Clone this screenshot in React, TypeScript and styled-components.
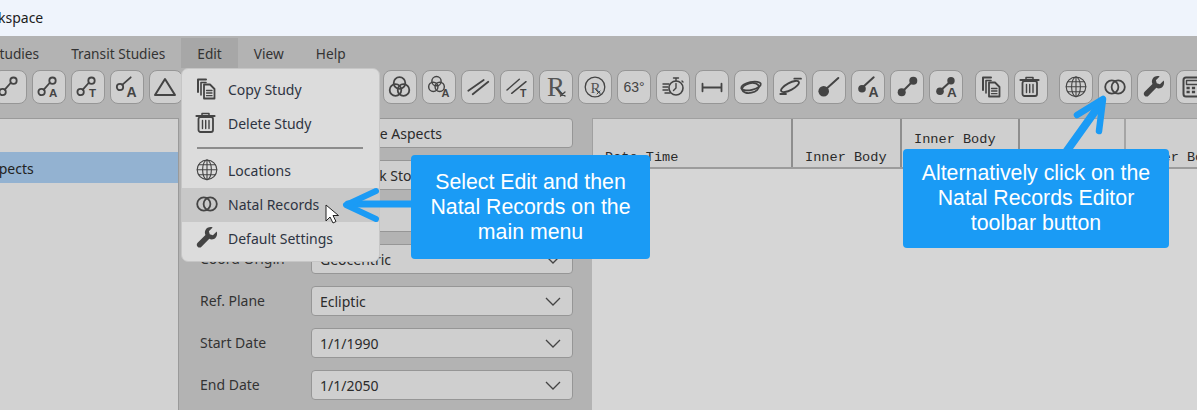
import React from "react";
import styled, { createGlobalStyle } from "styled-components";

const Global = createGlobalStyle`
  html, body { margin: 0; padding: 0; background: #b3b3b3; overflow: hidden; }
  body { font-family: "Noto Sans", "Open Sans", sans-serif; font-size: 14px; color: #2b2b2b; }
  * { box-sizing: border-box; }
`;

const Page = styled.div`
  position: relative; width: 1197px; height: 410px; overflow: hidden;
  display: flex; flex-direction: column; background: #b3b3b3;
`;
const TitleBar = styled.div`
  height: 36px; flex: none; background: #eff4fc; display: flex; align-items: center;
  font-size: 14px; color: #1c1c1c; padding-bottom: 1px;
`;
const TitleText = styled.span` margin-left: -29px; `;
const MenuBar = styled.div`
  height: 32px; flex: none; display: flex; margin-left: -24px; padding-top: 2px; font-size: 13.7px;
`;
const MenuTab = styled.div<{ $active?: boolean }>`
  padding: 0 16px; display: flex; align-items: center; height: 30px; color: #333;
  background: ${p => (p.$active ? "#a7a7a7" : "transparent")};
`;
const Toolbar = styled.div` height: 50px; flex: none; display: flex; margin-left: -7px; padding-top: 2px; `;
const ToolGroup = styled.div<{ $gap?: number }>` display: flex; gap: 5px; margin-right: ${p => p.$gap ?? 0}px; `;
const ToolButton = styled.div`
  width: 34px; height: 34px; flex: none; border: 1.5px solid #969696; border-radius: 8px; background: #cfcfcf;
  display: flex; align-items: center; justify-content: center; color: #444;
`;
const ToolLabel = styled.span` font-size: 14px; font-weight: 500; color: #444; font-family: "Liberation Sans", sans-serif; `;
const Glyph = styled.svg.attrs({ viewBox: "0 0 26 26", width: 26, height: 26 })`
  flex: none; fill: none; stroke: #444; stroke-width: 1.8; stroke-linecap: round; stroke-linejoin: round;
  text { stroke: none; fill: #444; font-family: "Liberation Sans", sans-serif; font-weight: 700; font-size: 13px; }
  .rx { font-family: "Liberation Serif", serif; font-weight: 400; fill: #555; }
  .solid { fill: #444; stroke: none; }
`;

const Content = styled.div` flex: 1; display: flex; min-height: 0; `;
const LeftPanel = styled.div`
  width: 179px; flex: none; background: #d2d2d2; border-top: 1.5px solid #9a9a9a; border-right: 1.5px solid #9a9a9a;
  padding-top: 33px;
`;
const Selected = styled.div`
  height: 31px; background: #93b2d1; display: flex; align-items: center; color: #222; padding-top: 2px;
`;
const SelectedText = styled.span` margin-left: -17px; `;
const Middle = styled.div`
  width: 413px; flex: none; padding: 0 19px 0 21px; display: flex; flex-direction: column; gap: 12px;
`;
const WideButton = styled.div`
  height: 30px; border: 1.5px solid #969696; border-radius: 4px; background: #cfcfcf;
  display: flex; align-items: center; justify-content: center; color: #2b2b2b; flex: none; padding-right: 4px;
`;
const FieldRow = styled.div` display: grid; grid-template-columns: 111px 1fr; align-items: center; height: 30px; flex: none; `;
const FieldLabel = styled.div` color: #333; padding-bottom: 2px; `;
const Select = styled.div`
  height: 30px; border: 1.5px solid #969696; border-radius: 4px; background: #cfcfcf; padding: 0 11px 0 8px;
  display: flex; align-items: center; justify-content: space-between; color: #2b2b2b;
`;
const Chevron = styled.svg.attrs({ viewBox: "0 0 16 9", width: 16, height: 9 })`
  fill: none; stroke: #444; stroke-width: 1.3;
`;
const TablePanel = styled.div` flex: 1; background: #d6d6d6; display: flex; flex-direction: column; min-width: 0; `;
const HeaderRow = styled.div`
  height: 51px; background: #cfcfcf; display: flex; border-top: 1.5px solid #a0a0a0; border-left: 1.5px solid #a0a0a0;
  border-bottom: 2px solid #9c9c9c; font-family: "Liberation Mono", monospace; font-size: 13.6px; color: #2a2a2a;
`;
const HeaderCell = styled.div<{ $w: number; $edge?: string }>`
  width: ${p => p.$w}px; flex: none; border-right: 2px solid ${p => p.$edge ?? "#8e8e8e"}; padding: 0 0 0 12px;
  display: flex; align-items: flex-end; line-height: 18px; white-space: pre;
`;

const DropMenu = styled.div`
  position: absolute; left: 181px; top: 68px; width: 199px; height: 194px; background: #dcdcdc;
  border-radius: 7px; border: 1px solid #c6c6c6; padding-top: 4px; color: #2e3442;
`;
const DropItem = styled.div<{ $hover?: boolean }>`
  height: 34px; display: flex; align-items: center; gap: 8px; padding: 0 0 2px 12px;
  background: ${p => (p.$hover ? "#c8c8c8" : "transparent")};
  white-space: nowrap;
`;
const DropRule = styled.div` height: 2px; background: #8c8c8c; margin: 6px 16px 5px 15px; `;

const Callout = styled.div<{ $x: number; $y: number; $w: number; $h: number }>`
  position: absolute; left: ${p => p.$x}px; top: ${p => p.$y}px; width: ${p => p.$w}px; height: ${p => p.$h}px;
  background: #1a9bf5; border-radius: 4px; color: #fff; font-family: "Liberation Sans", Arial, sans-serif;
  font-size: 21.3px; line-height: 25px; text-align: center; display: flex; align-items: center; justify-content: center;
`;
const Overlay = styled.svg`
  position: absolute; left: 0; top: 0; width: 1197px; height: 410px; pointer-events: none;
  fill: none; stroke: #1a9bf5; stroke-linecap: round; stroke-linejoin: round;
`;

const Tag = ({ t, x = 13, y = 23, size = 11.500 }: { t: string; x?: number; y?: number; size?: number }) => (
  <text x={x} y={y} style={{ fontSize: size }}>{t}</text>
);
const OpenLink = () => (
  <>
    <line x1="7.800" y1="15.700" x2="13.600" y2="9" />
    <circle cx="5.600" cy="18" r="3.200" />
    <circle cx="16.500" cy="6.700" r="3.200" />
  </>
);
const Three = () => (
  <>
    <circle cx="12.500" cy="9" r="5.800" /><circle cx="8.500" cy="16" r="5.800" /><circle cx="16.500" cy="16" r="5.800" />
  </>
);
const CopyIcon = () => (
  <>
    <path d="M4 16V3.500h8" strokeWidth="2" />
    <path d="M7 19V6.500h5" strokeWidth="1.600" />
    <path d="M10 8.500h6l4.500 4.500v9.500H10z" />
    <path d="M12.500 14.500h5.500M12.500 17h5.500M12.500 19.700h5.500" strokeWidth="1.300" />
  </>
);
const TrashIcon = () => (
  <>
    <path d="M2.500 6h18" strokeWidth="2.200" />
    <path d="M8 5.500V3.500h7v2" strokeWidth="1.500" />
    <rect x="4.500" y="7" width="14.500" height="15" rx="2" />
    <path d="M8.500 10.500v8M11.700 10.500v8M15 10.500v8" strokeWidth="1.400" />
  </>
);
const GlobeIcon = () => (
  <g strokeWidth="1.100">
    <circle cx="13" cy="12.800" r="9.800" />
    <ellipse cx="13" cy="12.800" rx="4.400" ry="9.800" />
    <path d="M13 3v19.600M3.200 12.800h19.600M4.600 7.800h16.800M4.600 17.800h16.800" />
  </g>
);
const RingsIcon = () => (
  <>
    <circle cx="9.800" cy="13" r="6.600" /><circle cx="16.200" cy="13" r="6.600" />
  </>
);
const WrenchIcon = () => (
  <g transform="translate(1.600 1) scale(.88)">
    <path className="solid" d="M24 6.200l-4.300 4.200-3.600-.9-1-3.600L19.400 1.600c-3.300-1-6.900.2-8.300 3.300-.8 1.800-.7 3.700.1 5.300L2.300 19.100c-1.300 1.300-1.300 3.200 0 4.400 1.300 1.300 3.200 1.300 4.400 0l8.900-8.900c1.600.8 3.500.9 5.300.1 3-1.400 4.200-5.100 3.100-8.500z" />
  </g>
);
const CalculatorIcon = () => (
  <>
    <rect x="3.500" y="3.500" width="20" height="19" rx="2.500" strokeWidth="2" />
    <rect x="6.500" y="6.500" width="14" height="4" strokeWidth="1.400" />
    <path d="M6.500 14h14M6.500 18h14" strokeWidth="2.400" strokeDasharray="3.200 2.200" strokeLinecap="butt" />
  </>
);
const Triangle = () => <path d="M12 5L22 21H2z" strokeWidth="2" />;

const studyIcons: React.ReactNode[] = [
  <Glyph><OpenLink /></Glyph>,
  <Glyph><OpenLink /><Tag t="A" /></Glyph>,
  <Glyph><OpenLink /><Tag t="T" x={14} /></Glyph>,
  <Glyph><path d="M8.200 10.800L16.700 3.300" /><circle cx="6" cy="13" r="3.200" /><Tag t="A" x={12.500} size={14} /></Glyph>,
  <Glyph><Triangle /></Glyph>,
  <Glyph><Triangle /></Glyph>,
  <Glyph><path d="M3 13h20" /></Glyph>,
  <Glyph><path d="M3 13h20" /></Glyph>,
  <Glyph><path d="M3 13h20" /></Glyph>,
  <Glyph><path d="M3 13h20" /></Glyph>,
  <Glyph><Three /></Glyph>,
  <Glyph><g transform="translate(.500 0) scale(.8)"><Three /></g><Tag t="A" x={15.500} y={23} size={11} /></Glyph>,
  <Glyph><path d="M3.300 16.700L18.700 6M7.700 20.300L23.300 7.700" /></Glyph>,
  <Glyph><path d="M3 16L15.300 5.300M7.700 19.300L22 7.700" strokeWidth="1.500" /><Tag t="T" x={16} y={23} size={10.500} /></Glyph>,
  <Glyph><text className="rx" x="4" y="22" style={{ fontSize: 27 }}>R</text><path d="M13 14.500l9 7.500M17.500 22l4.500-4" strokeWidth="1.300" /></Glyph>,
  <Glyph><circle cx="13" cy="13" r="9.800" strokeWidth="1.300" /><text className="rx" x="8.500" y="18.500" style={{ fontSize: 15 }}>R</text><path d="M13.500 15.500l5 4.500M15 20l3-3" strokeWidth="1" /></Glyph>,
  <ToolLabel>63°</ToolLabel>,
  <Glyph><circle cx="16" cy="14" r="7" strokeWidth="1.600" /><path d="M16 9.500v4.500l-2.500 2.500M13.500 4h5M16 4v3M22 7l1 1M3 10h6M3 13h5M3 16h5M5 19h5" strokeWidth="1.400" /></Glyph>,
  <Glyph><path d="M3.500 9.700v7.600M22.500 9.700v7.600M3.500 13.500h19" /></Glyph>,
  <Glyph strokeWidth="1.500"><ellipse cx="13" cy="12" rx="10" ry="4" transform="rotate(-12 13 12)" /><ellipse cx="12.500" cy="14" rx="8.500" ry="4.800" transform="rotate(-12 12.500 14)" /></Glyph>,
  <Glyph strokeWidth="1.300"><ellipse cx="13" cy="12.500" rx="10" ry="3.500" transform="rotate(-28 13 12.500)" /><path d="M17.300 4.700H24M3.300 20H9" /></Glyph>,
  <Glyph><path d="M9 16L22.300 4" strokeWidth="2" /><circle className="solid" cx="7.700" cy="17.300" r="5.300" /></Glyph>,
  <Glyph><path d="M8 13L18.700 3.300" strokeWidth="2" /><circle className="solid" cx="7" cy="14.700" r="3.800" /><Tag t="A" x={13.500} size={14} /></Glyph>,
  <Glyph><path d="M8 18L19 7" strokeWidth="2" /><circle className="solid" cx="7.700" cy="18.300" r="4" /><circle className="solid" cx="19.300" cy="6.700" r="4" /></Glyph>,
  <Glyph><path d="M7 17L18 7" strokeWidth="2" /><circle className="solid" cx="7" cy="17.300" r="3.800" /><circle className="solid" cx="18" cy="6.700" r="3.700" /><Tag t="A" x={14} size={13.500} /></Glyph>,
];

const sections = [
  { list: studyIcons, gap: 12 },
  { list: [<Glyph><CopyIcon /></Glyph>, <Glyph><TrashIcon /></Glyph>], gap: 11 },
  {
    list: [
      <Glyph><GlobeIcon /></Glyph>,
      <Glyph><RingsIcon /></Glyph>,
      <Glyph><WrenchIcon /></Glyph>,
      <Glyph><CalculatorIcon /></Glyph>,
    ],
    gap: 0,
  },
];

const fields = [
  { label: "Study", value: "Landmark Stock" },
  { label: "Ephemeris", value: "Standard" },
  { label: "Coord Origin", value: "Geocentric" },
  { label: "Ref. Plane", value: "Ecliptic" },
  { label: "Start Date", value: "1/1/1990" },
  { label: "End Date", value: "1/1/2050" },
];

const columns = [
  { w: 200, text: "Date Time" },
  { w: 109, text: "Inner Body" },
  { w: 118, text: "Inner Body\nLongitude" },
  { w: 106, text: "", edge: "#a5a5a5" },
  { w: 120, text: "Outer Body" },
];

export default function App() {
  return (
    <Page>
      <Global />
      <TitleBar><TitleText>Workspace</TitleText></TitleBar>
      <MenuBar>
        <MenuTab>Studies</MenuTab>
        <MenuTab>Transit Studies</MenuTab>
        <MenuTab $active>Edit</MenuTab>
        <MenuTab>View</MenuTab>
        <MenuTab>Help</MenuTab>
      </MenuBar>
      <Toolbar>
        {sections.map((s, i) => (
          <ToolGroup key={i} $gap={s.gap}>
            {s.list.map((n, j) => <ToolButton key={j}>{n}</ToolButton>)}
          </ToolGroup>
        ))}
      </Toolbar>
      <Content>
        <LeftPanel><Selected><SelectedText>Aspects</SelectedText></Selected></LeftPanel>
        <Middle>
          <WideButton>Compute Aspects</WideButton>
          {fields.map(f => (
            <FieldRow key={f.label}>
              <FieldLabel>{f.label}</FieldLabel>
              <Select>
                <span>{f.value}</span>
                <Chevron><path d="M1 1l7 7 7-7" /></Chevron>
              </Select>
            </FieldRow>
          ))}
        </Middle>
        <TablePanel>
          <HeaderRow>
            {columns.map((c, i) => <HeaderCell key={i} $w={c.w} $edge={c.edge}>{c.text}</HeaderCell>)}
          </HeaderRow>
        </TablePanel>
      </Content>

      <DropMenu>
        <DropItem><Glyph><CopyIcon /></Glyph>Copy Study</DropItem>
        <DropItem><Glyph><TrashIcon /></Glyph>Delete Study</DropItem>
        <DropRule />
        <DropItem><Glyph><GlobeIcon /></Glyph>Locations</DropItem>
        <DropItem $hover><Glyph><RingsIcon /></Glyph>Natal Records</DropItem>
        <DropItem><Glyph><WrenchIcon /></Glyph>Default Settings</DropItem>
      </DropMenu>

      <Overlay viewBox="0 0 1197 410">
        <path d="M411 204H348" strokeWidth="7" />
        <path d="M376 191L346 205L376 219" strokeWidth="6" />
        <path d="M1066 152L1101 103" strokeWidth="8" />
        <path d="M1077 115L1103 99L1099 131" strokeWidth="6.500" />
        <path d="M326 205v16l4-4 3 6 3-1.500-3-6h5.500z" fill="#fff" stroke="#222" strokeWidth="1" strokeLinecap="butt" />
      </Overlay>
      <Callout $x={411} $y={155} $w={239} $h={104}>Select Edit and then<br />Natal Records on the<br />main menu</Callout>
      <Callout $x={903} $y={149} $w={266} $h={99}>Alternatively click on the<br />Natal Records Editor<br />toolbar button</Callout>
    </Page>
  );
}
